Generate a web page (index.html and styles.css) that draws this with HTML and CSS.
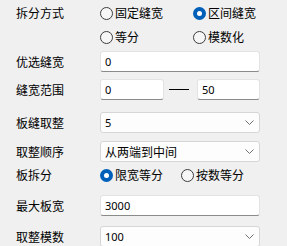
FILE: index.html
```html
<!DOCTYPE html>
<html lang="zh-CN">
<head>
    <meta charset="UTF-8">
    <title>拆分设置</title>
    <link rel="stylesheet" href="styles.css">
</head>
<body>
    <div class="form">
        <!-- 拆分方式 -->
        <div class="row r1">
            <span class="label">拆分方式</span>
            <div class="opts">
                <label class="radio"><span class="dot"></span>固定缝宽</label>
                <label class="radio on"><span class="dot"></span>区间缝宽</label>
            </div>
        </div>
        <div class="row r2">
            <span class="label"></span>
            <div class="opts">
                <label class="radio"><span class="dot"></span>等分</label>
                <label class="radio"><span class="dot"></span>模数化</label>
            </div>
        </div>

        <div class="row r3">
            <span class="label">优选缝宽</span>
            <input class="text wide" type="text" value="0">
        </div>

        <div class="row r4">
            <span class="label">缝宽范围</span>
            <input class="text small" type="text" value="0">
            <span class="dash"></span>
            <input class="text small" type="text" value="50">
        </div>

        <div class="row r5">
            <span class="label">板缝取整</span>
            <div class="select"><span>5</span>
                <svg width="9" height="5" viewBox="0 0 9 5"><path d="M0.5 0.5 L4.5 4.5 L8.5 0.5" fill="none" stroke="#707070" stroke-width="1"/></svg>
            </div>
        </div>

        <div class="row r6">
            <span class="label">取整顺序</span>
            <div class="select"><span class="cn">从两端到中间</span>
                <svg width="9" height="5" viewBox="0 0 9 5"><path d="M0.5 0.5 L4.5 4.5 L8.5 0.5" fill="none" stroke="#707070" stroke-width="1"/></svg>
            </div>
        </div>

        <div class="row r7">
            <span class="label">板拆分</span>
            <div class="opts narrow">
                <label class="radio on"><span class="dot"></span>限宽等分</label>
                <label class="radio"><span class="dot"></span>按数等分</label>
            </div>
        </div>

        <div class="row r8">
            <span class="label">最大板宽</span>
            <input class="text wide" type="text" value="3000">
        </div>

        <div class="row r9">
            <span class="label">取整模数</span>
            <div class="select"><span>100</span>
                <svg width="9" height="5" viewBox="0 0 9 5"><path d="M0.5 0.5 L4.5 4.5 L8.5 0.5" fill="none" stroke="#707070" stroke-width="1"/></svg>
            </div>
        </div>
    </div>
</body>
</html>
```

FILE: styles.css
```css
* {
    margin: 0;
    padding: 0;
    box-sizing: border-box;
}

body {
    background-color: #f0f0f0;
    font-family: "Noto Sans CJK SC", "Noto Sans", sans-serif;
    font-size: 12px;
    color: #000;
    overflow: hidden;
}

.form {
    padding-left: 16px;
    display: flex;
    flex-direction: column;
}

.row {
    display: flex;
    align-items: center;
    height: 21px;
}

.label {
    width: 84px;
    flex-shrink: 0;
    line-height: 1;
}

/* 行距 */
.r1 { height: 26px; }
.r2 { height: 22px; }
.r3 { margin-top: 3px; }
.r4 { margin-top: 7px; }
.r5 { margin-top: 12px; }
.r6 { margin-top: 8px; }
.r7 { margin-top: 1px; height: 24px; }
.r8 { margin-top: 8px; }
.r9 { margin-top: 10px; }

.opts {
    display: flex;
}

.radio {
    width: 93px;
    display: flex;
    align-items: center;
    gap: 2px;
    line-height: 1;
}

.narrow .radio {
    width: 81px;
}

.dot {
    width: 13px;
    height: 13px;
    border: 1px solid #3c3c3c;
    border-radius: 50%;
    background-color: #f6f6f6;
    display: flex;
    align-items: center;
    justify-content: center;
}

.radio.on .dot {
    border: none;
    background-color: #005fb8;
}

.radio.on .dot::after {
    content: "";
    width: 5px;
    height: 5px;
    border-radius: 50%;
    background-color: #fff;
}

.text {
    height: 21px;
    background-color: #fff;
    border: 1px solid #e3e3e3;
    border-bottom: 1px solid #8a8a8a;
    border-radius: 3px;
    padding-left: 4px;
    font-family: "Noto Sans", sans-serif;
    font-size: 11px;
    color: #000;
    outline: none;
}

.wide {
    width: 160px;
}

.small {
    width: 64px;
}

.small + .dash + .small {
    width: 63px;
}

.dash {
    width: 20px;
    margin: 0 8px 1px 5px;
    border-top: 1px solid #000;
}

.select {
    width: 160px;
    height: 21px;
    background-color: #fdfdfd;
    border: 1px solid #d6d6d6;
    border-radius: 3px;
    padding: 0 4px 0 4px;
    display: flex;
    align-items: center;
    justify-content: space-between;
    font-family: "Noto Sans", sans-serif;
    font-size: 11px;
}

.select svg {
    margin-right: 1px;
}

.select .cn {
    font-family: "Noto Sans CJK SC", sans-serif;
    font-size: 12px;
}
```
